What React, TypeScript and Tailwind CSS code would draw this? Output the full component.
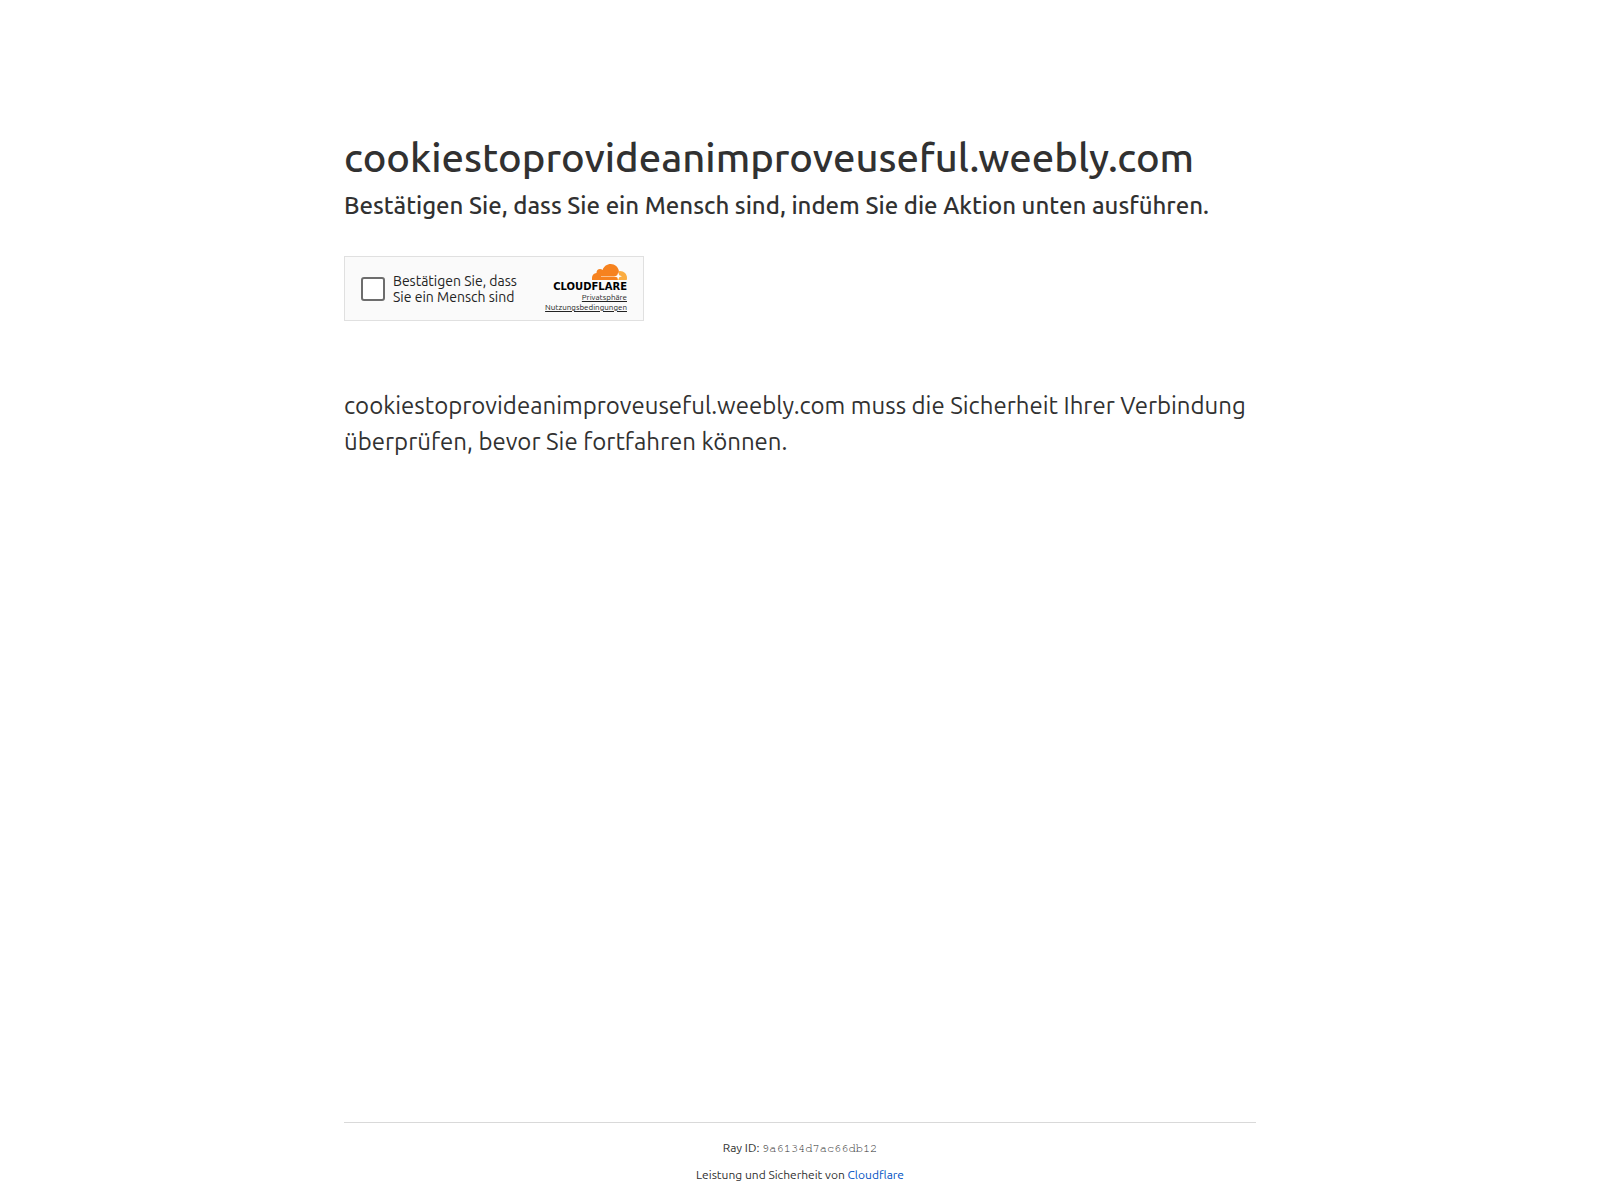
const host = "cookiestoprovideanimproveuseful.weebly.com";
const rayId = "9a6134d7ac66db12";

function CloudLogo() {
  return (
    <svg viewBox="0 0 35 16" className="h-4 w-[35px]" aria-hidden="true">
      <path
        fill="#f6821f"
        d="M0 16v-2.2c0-2.6 1.9-4.5 4.5-4.7C4.3 6.6 6 5 8 5c1 0 1.9.3 2.6.9C11.9 2.3 15 0 18.7 0c4.3 0 7.5 2.9 8.2 7L26 16Z"
      />
      <path
        fill="#fbad41"
        d="M27.2 7.1C31.6 6.7 35 9.8 35 14c0 .7-.1 1.4-.3 2H25.3Z"
      />
      <path stroke="#fac08c" strokeWidth="1" d="M9 12.5h14" />
      <path
        fill="#fff"
        d="M26.2 8.5l1 2.8 2.8 1-2.8 1-1 2.7-1-2.7-3-.5 3-1.5Z"
      />
    </svg>
  );
}

function Challenge() {
  return (
    <div className="mt-8 flex h-[65px] w-[300px] items-center justify-between border border-[#e0e0e0] bg-[#fafafa] px-4">
      <label className="flex items-center gap-2 text-[14px] leading-4 text-[#232323]">
        <input
          type="checkbox"
          className="size-6 shrink-0 appearance-none rounded-[3px] border-2 border-[#6d6d6d] bg-white"
        />
        <span>
          Bestätigen Sie, dass
          <br />
          Sie ein Mensch sind
        </span>
      </label>
      <div className="flex flex-col items-end text-[8px] leading-[10px] text-[#232323]">
        <CloudLogo />
        <span className="font-['DejaVu_Sans',sans-serif] text-[10px] leading-[13px] font-bold text-black">
          CLOUDFLARE
        </span>
        <a href="#privacy" className="underline">
          Privatsphäre
        </a>
        <a href="#terms" className="underline">
          Nutzungsbedingungen
        </a>
      </div>
    </div>
  );
}

export default function App() {
  return (
    <div className="flex min-h-screen flex-col bg-white font-['Ubuntu','Noto_Sans',sans-serif] text-[#313131]">
      <main className="mx-auto w-full max-w-[960px] flex-1 px-6 pt-32">
        <h1 className="text-[40px] leading-[60px] font-medium">{host}</h1>
        <h2 className="text-[24px] leading-9 font-medium">
          Bestätigen Sie, dass Sie ein Mensch sind, indem Sie die Aktion unten ausführen.
        </h2>
        <Challenge />
        <p className="mt-[67px] text-[24px] leading-9">
          {`${host} muss die Sicherheit Ihrer Verbindung überprüfen, bevor Sie fortfahren können.`}
        </p>
      </main>

      <footer className="mx-auto w-full max-w-[960px] px-6">
        <div className="flex flex-col gap-[9px] border-t border-[#d9d9d9] py-4 text-center text-[12px] leading-[18px]">
          <div>
            Ray ID:{" "}
            <code className="font-['FreeMono','Nimbus_Mono_PS','Liberation_Mono',monospace] text-[#313131]">
              {rayId}
            </code>
          </div>
          <div>
            Leistung und Sicherheit von{" "}
            <a href="#cloudflare" className="text-[#0051c3]">
              Cloudflare
            </a>
          </div>
        </div>
      </footer>
    </div>
  );
}
